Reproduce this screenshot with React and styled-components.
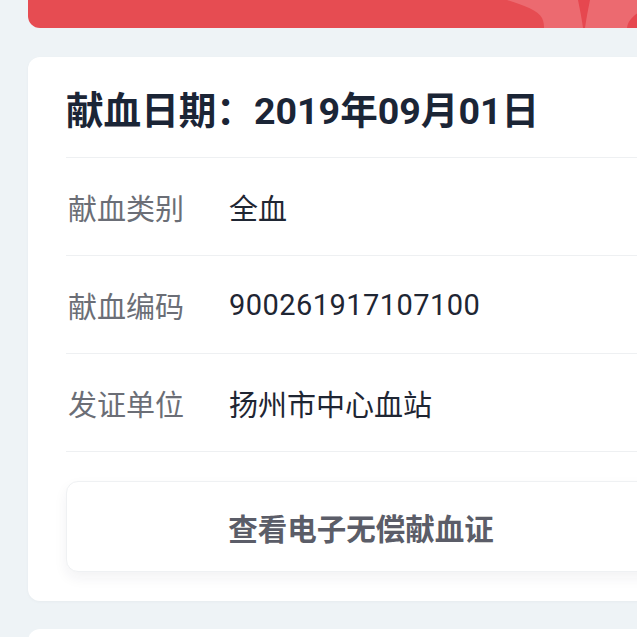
import styled, { createGlobalStyle } from "styled-components";

const GlobalStyle = createGlobalStyle`
  html, body {
    margin: 0;
    padding: 0;
    background: #eef3f6;
    overflow: hidden;
  }
  body {
    font-family: Roboto, "Noto Sans CJK SC", sans-serif;
  }
`;

const Page = styled.div`
  width: 666px;
  padding: 0 28px 40px;
  display: flex;
  flex-direction: column;
  gap: 28px;
`;

const Banner = styled.div`
  position: relative;
  height: 28px;
  margin-bottom: 1px;
  background: #e64c52;
  border-radius: 0 0 12px 12px;
  overflow: hidden;
`;

const BannerArt = styled.svg`
  position: absolute;
  right: 0;
  top: 0;
  width: 200px;
  height: 28px;
`;

const Card = styled.section`
  background: #fff;
  border-radius: 12px;
  padding: 0 38px 29px;
  box-shadow: 0 1px 3px rgba(40, 60, 80, 0.04);
`;

const Title = styled.h2`
  margin: 0;
  height: 100px;
  display: flex;
  align-items: center;
  font-size: 37.6px;
  font-weight: 700;
  color: #1b2536;
`;

const Row = styled.div`
  display: grid;
  grid-template-columns: 163px 1fr;
  align-items: center;
  height: 97px;
  border-top: 1px solid #eef0f2;
  &:last-of-type {
    border-bottom: 1px solid #eef0f2;
  }
`;

const Label = styled.span`
  font-size: 29px;
  color: #6b6e76;
  padding-left: 2px;
`;

const Value = styled.span`
  font-size: 29px;
  color: #1f2633;
  letter-spacing: ${(p) => (p.$num ? "0.45px" : "0")};
`;

const Button = styled.button`
  margin-top: 29px;
  width: 100%;
  height: 91px;
  display: flex;
  align-items: center;
  justify-content: center;
  background: #fff;
  border: 1px solid #eff1f3;
  border-radius: 12px;
  box-shadow: 0 6px 14px rgba(30, 40, 60, 0.06);
  font-family: Roboto, "Noto Sans CJK SC", sans-serif;
  font-size: 29.5px;
  font-weight: 700;
  color: #5b5d68;
`;

const NextCard = styled.section`
  height: 120px;
  background: #fff;
  border-radius: 12px;
`;

const rows = [
  ["献血类别", "全血"],
  ["献血编码", "900261917107100"],
  ["发证单位", "扬州市中心血站"],
];

export default function App() {
  return (
    <>
      <GlobalStyle />
      <Page>
        <Banner>
          <BannerArt viewBox="0 0 200 28" preserveAspectRatio="none">
            <path d="M13 0 C30 6 44 10 48 18 C50 22 50 26 50 28 L200 28 L200 0 Z" fill="#ec6a70" />
            <path d="M84 0 L96 0 C94 10 92 20 91 28 L89 28 C88 20 86 10 84 0 Z" fill="#e6474f" />
            <path d="M170 0 C150 8 134 16 133 28 L200 28 L200 0 Z" fill="#e6474f" />
          </BannerArt>
        </Banner>
        <Card>
          <Title>献血日期：2019年09月01日</Title>
          {rows.map(([k, v]) => (
            <Row key={k}>
              <Label>{k}</Label>
              <Value $num={/^\d+$/.test(v)}>{v}</Value>
            </Row>
          ))}
          <Button>查看电子无偿献血证</Button>
        </Card>
        <NextCard />
      </Page>
    </>
  );
}
